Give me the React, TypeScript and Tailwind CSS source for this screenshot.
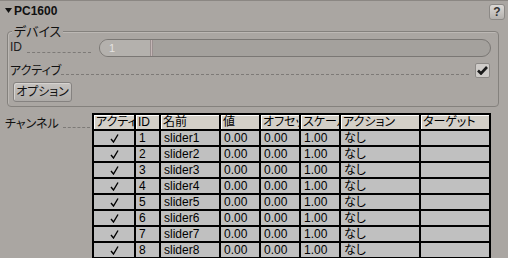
const COLS = [
  { key: 'active', label: 'アクティブ', w: 'w-[42px]' },
  { key: 'id', label: 'ID', w: 'w-[25px]' },
  { key: 'name', label: '名前', w: 'w-[60px]' },
  { key: 'value', label: '値', w: 'w-[40px]' },
  { key: 'offset', label: 'オフセット', w: 'w-[40px]' },
  { key: 'scale', label: 'スケール', w: 'w-[40px]' },
  { key: 'action', label: 'アクション', w: 'w-[80px]' },
  { key: 'target', label: 'ターゲット', w: 'w-[70px]' },
]

const channels = Array.from({ length: 8 }, (_, i) => ({
  id: i + 1,
  name: `slider${i + 1}`,
  value: '0.00',
  offset: '0.00',
  scale: '1.00',
  action: 'なし',
  target: '',
}))

function Dashes({ className = '' }: { className?: string }) {
  return <div className={`flex-1 border-b border-dashed border-[#7d7a77] ${className}`} />
}

export default function App() {
  return (
    <div className="w-[508px] h-[258px] overflow-hidden bg-[#aaa6a2] text-[12px] leading-[14px] text-black font-['Liberation_Sans','Noto_Sans_CJK_JP',sans-serif] [font-feature-settings:'palt']">
      <div className="border-t border-[#8b8783]" />

      {/* header */}
      <div className="flex h-[19px] items-center pl-[5px] pr-[3px]">
        <svg width="7" height="5" viewBox="0 0 7 5">
          <path d="M0 0h7L3.5 5z" fill="#111" />
        </svg>
        <span className="ml-[2px] font-bold text-[12px] text-[#111]">PC1600</span>
        <div className="ml-auto mt-[2px] flex h-[16px] w-[16px] items-center justify-center rounded-[3px] border border-[#8c8986] bg-gradient-to-b from-[#dcd9d6] to-[#b4b1ae] text-[12px] font-bold text-[#333]">
          ?
        </div>
      </div>

      {/* device group */}
      <div className="relative ml-[7px] mt-[11px] h-[76px] w-[492px] rounded-[4px] border border-[#84817d] shadow-[inset_1px_1px_0_#bcb8b4]">
        <span className="absolute left-[4px] top-[-8px] bg-[#aaa6a2] px-[2px] text-[13px] leading-[15px] text-[#111]">
          デバイス
        </span>

        <div className="mt-[7px] flex h-[18px] items-end pl-[2px] pr-[7px]">
          <span className="mb-[3px] text-[#222]">ID</span>
          <Dashes className="mb-[4px] ml-[5px] mr-[8px]" />
          <div className="flex h-[18px] w-[392px] overflow-hidden rounded-[9px] border border-[#7a7774] bg-[#a4a19d]">
            <div className="flex w-[50px] items-center bg-[#b4b1ad] pl-[9px] text-[11px] text-[#e4e2e0]">
              1
            </div>
            <div className="w-[3px] border-x border-[#9a8f8f] bg-[#c4b6b6]" />
          </div>
        </div>

        <div className="mt-[5px] flex h-[16px] items-end pl-[2px] pr-[8px]">
          <span className="text-[#111]">アクティブ</span>
          <Dashes className="mb-[3px] mr-[6px]" />
          <div className="flex h-[15px] w-[15px] items-center justify-center self-center rounded-[2px] border border-[#8d8a87] bg-[#cfccc9]">
            <svg width="11" height="9" viewBox="0 0 11 9">
              <path d="M1 4.5l3 3L10 1" stroke="#1a1a1a" strokeWidth="2.6" fill="none" />
            </svg>
          </div>
        </div>

        <button className="ml-[5px] mt-[4px] flex h-[20px] w-[59px] items-center justify-center rounded-[3px] border border-[#858280] bg-gradient-to-b from-[#c6c3c0] to-[#aeaba8] text-[12px] text-[#111] shadow-[inset_1px_1px_0_#d6d3d0]">
          オプション
        </button>
      </div>

      {/* channels */}
      <div className="mt-[6px] flex">
        <div className="flex w-[92px] items-start pl-[5px] pt-[4px]">
          <span className="text-[#111]">チャンネル</span>
          <Dashes className="mt-[10px] ml-[4px] mr-[2px]" />
        </div>
        <div className="border-l-2 border-t-2 border-black">
          <div className="flex h-[16px] border-b-2 border-black bg-[#d4d0c8]">
            {COLS.map((c) => (
              <div
                key={c.key}
                className={`${c.w} overflow-hidden whitespace-nowrap border-r-2 border-black pl-[2px] text-[12px] leading-[14px] shadow-[inset_1px_1px_0_#fff]`}
              >
                {c.label}
              </div>
            ))}
          </div>
          {channels.map((ch) => (
            <div key={ch.id} className="flex h-[16px] border-b-2 border-black bg-[#c0c0c0]">
              <div className="flex w-[42px] items-center justify-center border-r-2 border-black">
                <svg width="9" height="9" viewBox="0 0 9 9">
                  <path d="M1 5l2.5 3L8 0.5" stroke="#000" strokeWidth="1.4" fill="none" />
                </svg>
              </div>
              <div className="w-[25px] border-r-2 border-black pl-[3px]">{ch.id}</div>
              <div className="w-[60px] border-r-2 border-black pl-[3px]">{ch.name}</div>
              <div className="w-[40px] border-r-2 border-black pl-[3px]">{ch.value}</div>
              <div className="w-[40px] border-r-2 border-black pl-[3px]">{ch.offset}</div>
              <div className="w-[40px] border-r-2 border-black pl-[3px]">{ch.scale}</div>
              <div className="w-[80px] border-r-2 border-black pl-[3px]">{ch.action}</div>
              <div className="w-[70px] border-r-2 border-black pl-[3px]">{ch.target}</div>
            </div>
          ))}
        </div>
      </div>
    </div>
  )
}
